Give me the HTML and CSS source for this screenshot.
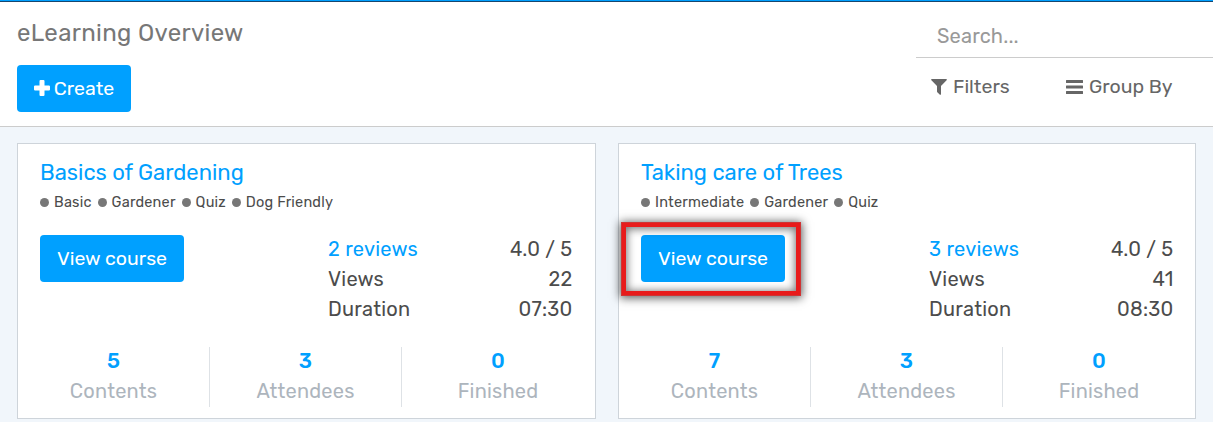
FILE: index.html
```html
<!DOCTYPE html>
<html lang="en">
<head>
<meta charset="utf-8">
<title>eLearning Overview</title>
<link rel="stylesheet" href="styles.css">
</head>
<body>
<header class="panel">
  <div class="panel-left">
    <h1 class="page-title">eLearning Overview</h1>
    <button class="btn btn-create"><svg class="plus" viewBox="0 0 16 16"><path d="M6.600 0h2.800q1.100 0 1.100 1.100v4.400h4.400q1.100 0 1.100 1.100v2.800q0 1.100-1.100 1.100h-4.400v4.400q0 1.100-1.100 1.100H6.600q-1.100 0-1.100-1.100v-4.400H1.100Q0 10.500 0 9.400V6.600Q0 5.500 1.100 5.500h4.400V1.100Q5.500 0 6.600 0z"/></svg><span>Create</span></button>
  </div>
  <div class="panel-right">
    <div class="search">Search...</div>
    <div class="options">
      <div class="option filters"><svg class="funnel" viewBox="0 0 16 16"><path d="M.7 0h14.600q.9.500.3 1.200L10 6.900v8.300q-.3.900-1.100.5L6.300 13.200Q6 12.900 6 12.500V6.900L.4 1.200Q-.2.500.7 0z"/></svg><span>Filters</span></div>
      <div class="option group"><svg class="bars" viewBox="0 0 17 14"><path d="M.5 0h16q.5 0 .5.500v2q0 .5-.5.500H.5Q0 3 0 2.500v-2Q0 0 .5 0zM.5 5.500h16q.5 0 .5.500v2q0 .5-.5.500H.5Q0 8.500 0 8V6q0-.5.500-.5zM.5 11h16q.5 0 .5.500v2q0 .5-.5.500H.5Q0 14 0 13.500v-2Q0 11 .5 11z"/></svg><span>Group By</span></div>
    </div>
  </div>
</header>
<main class="cards">
  <article class="card">
    <h2 class="course">Basics of Gardening</h2>
    <div class="tags"><span class="tag">Basic</span><span class="tag">Gardener</span><span class="tag">Quiz</span><span class="tag">Dog Friendly</span></div>
    <div class="middle">
      <button class="btn btn-view">View course</button>
      <div class="facts">
        <div class="fact"><a class="link">2 reviews</a><span>4.0 / 5</span></div>
        <div class="fact"><span>Views</span><span>22</span></div>
        <div class="fact"><span>Duration</span><span>07:30</span></div>
      </div>
    </div>
    <div class="stats">
      <div class="stat"><b>5</b><span>Contents</span></div>
      <div class="stat"><b>3</b><span>Attendees</span></div>
      <div class="stat"><b>0</b><span>Finished</span></div>
    </div>
  </article>
  <article class="card">
    <h2 class="course">Taking care of Trees</h2>
    <div class="tags"><span class="tag">Intermediate</span><span class="tag">Gardener</span><span class="tag">Quiz</span></div>
    <div class="middle">
      <div class="marked"><button class="btn btn-view">View course</button><div class="highlight"></div></div>
      <div class="facts">
        <div class="fact"><a class="link">3 reviews</a><span>4.0 / 5</span></div>
        <div class="fact"><span>Views</span><span>41</span></div>
        <div class="fact"><span>Duration</span><span>08:30</span></div>
      </div>
    </div>
    <div class="stats">
      <div class="stat"><b>7</b><span>Contents</span></div>
      <div class="stat"><b>3</b><span>Attendees</span></div>
      <div class="stat"><b>0</b><span>Finished</span></div>
    </div>
  </article>
</main>
</body>
</html>
```
FILE: styles.css
```css
* { box-sizing: border-box; }
body { margin: 0; height: 422px; overflow: hidden; background: #f1f6fb; font: 20px/30px Rubik, Roboto, sans-serif; color: #4c4c4c; }
.panel { display: flex; justify-content: space-between; height: 127px; background: #fff; border-top: 1px solid #00a0ff; border-bottom: 1px solid #ccc; box-shadow: inset 0 1px #16466f; }
.panel-left { padding: 14px 0 0 17px; }
.page-title { margin: 0 0 14px; font-size: 24px; line-height: 36px; font-weight: 400; color: #777; letter-spacing: .33px; }
.btn { display: flex; align-items: center; justify-content: center; height: 47px; padding: 0; border: 0; border-radius: 4px; background: #00a0ff; color: #fff; font: inherit; font-size: 19.500px; }
.btn-create { width: 114px; gap: 4px; }
.plus { width: 16px; height: 16px; fill: #fff; margin-top: -2px; }
.panel-right { width: 297px; padding-top: 14px; color: #666; }
.search { height: 43px; padding: 6px 0 0 21px; border-bottom: 1px solid #ccc; color: #999; letter-spacing: .15px; }
.options { display: flex; padding: 14px 0 0 15px; font-size: 19.500px; }
.option { display: flex; align-items: center; }
.filters { width: 135px; gap: 6px; }
.group { gap: 6px; }
.funnel { width: 16px; height: 16px; fill: #666; }
.bars { width: 17px; height: 14px; margin-top: -1px; fill: #666; }
.cards { display: grid; grid-template-columns: 579px 578px; gap: 22px; padding: 16px 17px; }
.card { height: 276px; padding: 12px 0 0 22px; border: 1px solid #ced4da; background: #fff; }
.course { margin: 0; font-size: 22px; line-height: 33px; font-weight: 400; color: #00a0ff; }
.tags { display: flex; gap: 6px; height: 26px; font-size: 14.500px; line-height: 27px; letter-spacing: .2px; }
.tag { display: flex; align-items: center; gap: 5px; }
.tag::before { content: ""; width: 9px; height: 9px; margin-top: 1px; border-radius: 50%; background: #777; }
.middle { display: flex; gap: 144px; margin-top: 20px; }
.btn-view { width: 144px; }
.marked { position: relative; height: 47px; }
.highlight { position: absolute; left: -20px; top: -13px; width: 180px; height: 74px; border: 5px solid #e81b1b; outline: 1px solid rgba(190,70,70,.6); outline-offset: -1px; box-shadow: 0 1px 9px 1px rgba(0,0,0,.65), inset 0 1px 9px 1px rgba(0,0,0,.55); }
.facts { width: 244.500px; margin-top: -1px; }
.fact { display: flex; justify-content: space-between; letter-spacing: .25px; }
.link { color: #00a0ff; }
.stats { display: grid; grid-template-columns: 192px 192px 192px; margin: 23px 0 0 -22px; text-align: center; }
.stat { display: flex; flex-direction: column; height: 60px; color: #adb5bd; letter-spacing: .2px; line-height: 28px; }
.stat:not(:last-child) { border-right: 1px solid #dee2e6; }
.stat b { height: 30px; font-weight: 500; font-size: 21px; line-height: 28px; color: #00a0ff; }
```
